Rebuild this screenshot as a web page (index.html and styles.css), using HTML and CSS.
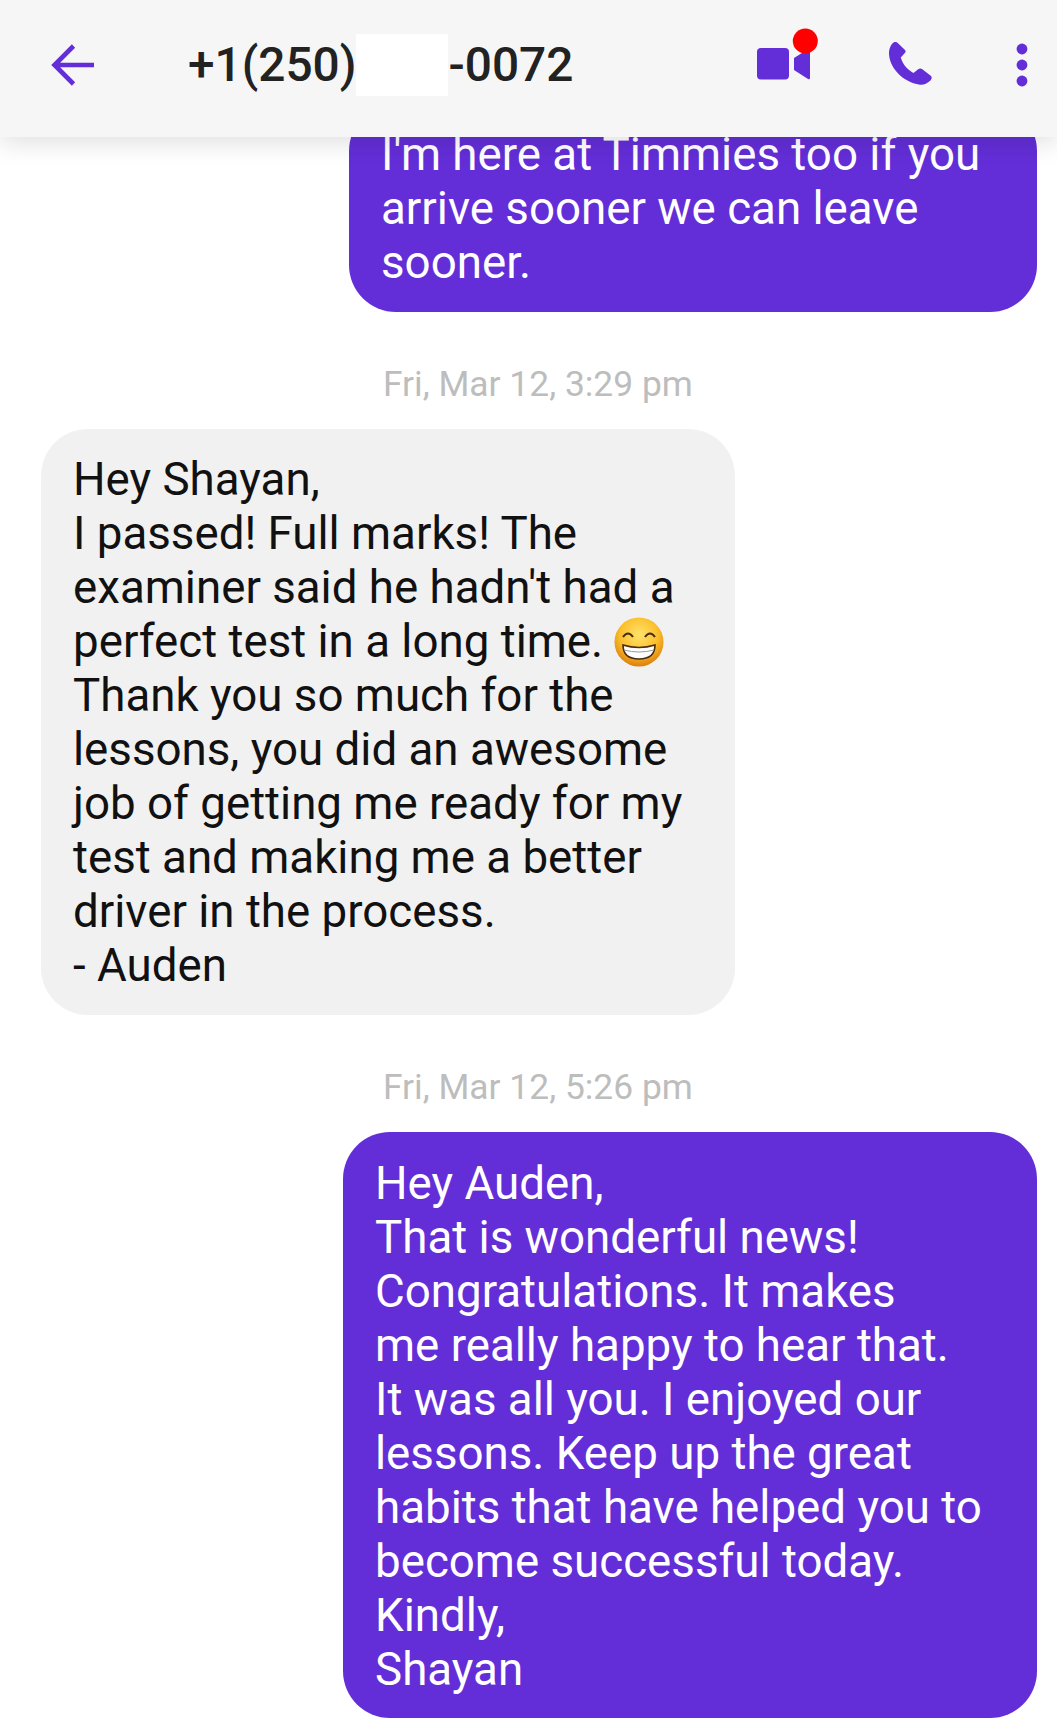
FILE: index.html
```html
<!DOCTYPE html>
<html lang="en">
<head>
<meta charset="utf-8">
<title>Conversation</title>
<link rel="stylesheet" href="styles.css">
</head>
<body>
<div class="screen">
  <header class="topbar">
    <svg class="icon-back" viewBox="0 0 44 44" width="44" height="44"><path d="M43 22H4M22.500 3 3.500 22l19 19" fill="none" stroke="#632ed8" stroke-width="4.600"/></svg>
    <div class="number"><span>+1(250)</span><span class="redact"></span><span>-0072</span></div>
    <div class="actions">
      <svg class="icon-video" viewBox="0 0 61 52" width="61" height="52"><rect x="0" y="20" width="32" height="31.500" rx="4" fill="#632ed8"/><path d="M37 30 53 20V50q0 2-2 1L37 42z" fill="#632ed8"/><circle cx="48.300" cy="13" r="12.500" fill="#f00"/></svg>
      <svg class="icon-phone" viewBox="0 0 43 43" width="43" height="43"><path d="M5 .3c1.500-.6 3 0 4 1L16 8c.8 1 .8 2 0 2.800L11.800 15.500C14 23 19 28 24.500 31L29.500 27c1-.8 2.500-.8 3.500 0L42 34c1 1 1 3-.5 4.500C38 41.500 35 43 31 42.700 13 40 0 25 0 11 0 7 2 2 5 .3z" fill="#632ed8"/></svg>
      <svg class="icon-more" viewBox="0 0 12 44" width="12" height="44"><circle cx="6" cy="6" r="5.400" fill="#632ed8"/><circle cx="6" cy="22" r="5.400" fill="#632ed8"/><circle cx="6" cy="38" r="5.400" fill="#632ed8"/></svg>
    </div>
  </header>
  <main class="thread">
    <div class="bubble sent first">I'm here at Timmies too if you<br>arrive sooner we can leave<br>sooner.</div>
    <div class="stamp">Fri, Mar 12, 3:29 pm</div>
    <div class="bubble received">Hey Shayan,<br>I passed! Full marks! The<br>examiner said he hadn't had a<br>perfect test in a long time. <svg class="emoji" viewBox="0 0 50 50" width="50" height="50"><defs><radialGradient id="face" cx="50%" cy="35%" r="65%"><stop offset="0" stop-color="#ffe36b"/><stop offset=".6" stop-color="#fbbe2c"/><stop offset="1" stop-color="#dd7f0c"/></radialGradient></defs><circle cx="25" cy="25" r="24.500" fill="url(#face)"/><path d="M9 20q5-7 10 0M31 20q5-7 10 0" fill="none" stroke="#4a2c10" stroke-width="2"/><path d="M9 28q16 5 32 0q0 14-16 14T9 28z" fill="#fff" stroke="#4a2c10" stroke-width="1.600"/><path d="M10 33q15 4 30 0" fill="none" stroke="#999" stroke-width="1"/></svg><br>Thank you so much for the<br>lessons, you did an awesome<br>job of getting me ready for my<br>test and making me a better<br>driver in the process.<br>- Auden</div>
    <div class="stamp">Fri, Mar 12, 5:26 pm</div>
    <div class="bubble sent wide">Hey Auden,<br>That is wonderful news!<br>Congratulations. It makes<br>me really happy to hear that.<br>It was all you. I enjoyed our<br>lessons. Keep up the great<br>habits that have helped you to<br>become successful today.<br>Kindly,<br>Shayan</div>
  </main>
</div>
</body>
</html>
```
FILE: styles.css
```css
html, body { margin: 0; padding: 0; background: #fff; }
.screen { position: relative; width: 1057px; height: 1724px; overflow: hidden; font-family: Roboto, "Liberation Sans", sans-serif; }
.topbar { position: absolute; top: 0; left: 0; right: 0; height: 137px; background: #f6f6f6; box-shadow: 0 4px 26px rgba(0,0,0,.14); display: flex; align-items: center; padding: 0 29px 8px 51px; box-sizing: border-box; z-index: 2; }
.icon-back { flex: none; }
.number { margin-left: 93px; display: flex; align-items: center; font-size: 47.8px; font-weight: 500; color: #222; }
.redact { width: 92px; height: 62px; background: #fff; }
.actions { margin-left: auto; display: flex; align-items: center; }
.icon-video { margin-right: 71px; margin-bottom: 22px; }
.icon-phone { margin-right: 84px; margin-bottom: 3px; }
.thread { padding-top: 104px; display: flex; flex-direction: column; }
.bubble { box-sizing: border-box; padding: 24px 0 22px 32px; font-size: 45.7px; line-height: 54px; border-radius: 47px; white-space: nowrap; }
.sent { background: #632ed8; color: #fff; margin-left: auto; margin-right: 20px; }
.first { width: 688px; }
.wide { width: 694px; padding-top: 25px; padding-bottom: 21px; }
.received { background: #f1f1f1; color: #111; width: 694px; margin-left: 41px; }
.stamp { margin-left: 383px; height: 117px; line-height: 144px; font-size: 35.4px; color: #bdbdbd; }
.emoji { vertical-align: -10px; }
```
